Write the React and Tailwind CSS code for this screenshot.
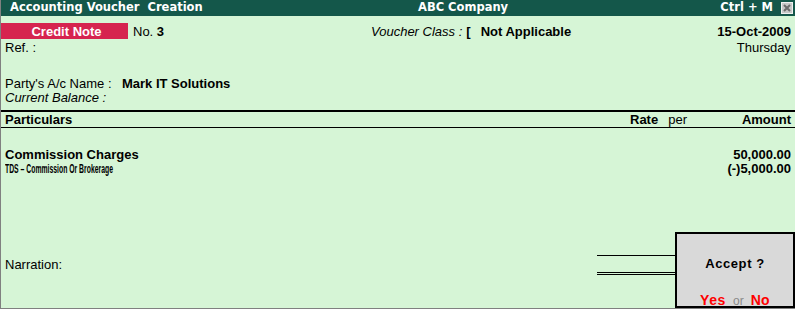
import React from 'react';

function CloseBox() {
    return (
        <span className="ml-[8px] flex h-[12px] w-[12px] items-center justify-center border border-[#f0f0f0] bg-[#c8c8c8]">
            <svg width="8" height="8" viewBox="0 0 8 8">
                <path d="M1 1 L7 7 M7 1 L1 7" stroke="#6b6b6b" strokeWidth="2" />
            </svg>
        </span>
    );
}

export default function App() {
    const base = { fontFamily: '"Liberation Sans", Arial, sans-serif' };
    const title = { fontFamily: '"DejaVu Sans", Verdana, sans-serif' };

    return (
        <div className="h-[315px] w-[801px] bg-white" style={base}>
            <div className="relative flex h-[309px] w-[795px] flex-col border-b border-l border-[#808080] bg-[#d6f5d6] text-[13px] leading-none text-black">
                {/* Title bar */}
                <div
                    className="flex h-[16px] items-center bg-[#14574a] text-[11.5px] font-bold text-white"
                    style={title}
                >
                    <span className="w-[417px] pl-[9px]">Accounting Voucher&nbsp; Creation</span>
                    <span className="flex-1">ABC Company</span>
                    <span>Ctrl + M</span>
                    <CloseBox />
                    <span className="w-[2px]" />
                </div>

                {/* Voucher type row */}
                <div className="mt-[7px] flex h-[16px] items-center">
                    <div className="flex h-[16px] w-[127px] items-center justify-center bg-[#d6244f] pl-[4px] font-bold text-white">
                        Credit Note
                    </div>
                    <div className="w-[243px] pl-[5px]">
                        No. <span className="font-bold">3</span>
                    </div>
                    <span className="italic">Voucher Class :</span>
                    <span className="ml-[4px] font-bold">[</span>
                    <span className="ml-[10px] font-bold">Not Applicable</span>
                    <span className="flex-1 pr-[4px] text-right font-bold">15-Oct-2009</span>
                </div>

                <div className="flex h-[16px] items-center px-[4px]">
                    <span className="flex-1">Ref. :</span>
                    <span>Thursday</span>
                </div>

                {/* Party */}
                <div className="mt-[21px] flex h-[14px] items-center pl-[4px]">
                    <span className="w-[117px]">Party's A/c Name :</span>
                    <span className="font-bold">Mark IT Solutions</span>
                </div>
                <div className="flex h-[14px] items-center pl-[4px] italic">Current Balance :</div>

                {/* Table header */}
                <div className="mt-[6px] h-[2px] bg-black" />
                <div className="flex h-[16px] items-center border-b border-black">
                    <span className="w-[629px] pl-[4px] font-bold">Particulars</span>
                    <span className="font-bold">Rate</span>
                    <span className="ml-[10px]">per</span>
                    <span className="flex-1 pr-[4px] text-right font-bold">Amount</span>
                </div>

                {/* Entries */}
                <div className="mt-[19px] flex h-[14px] items-center px-[4px]">
                    <span className="flex-1 font-bold">Commission Charges</span>
                    <span className="font-bold">50,000.00</span>
                </div>
                <div className="flex h-[14px] items-center px-[4px]">
                    <span className="flex-1">
                        <span className="inline-block origin-left scale-x-[0.57] text-[12px] font-bold whitespace-nowrap">
                            TDS – Commission Or Brokerage
                        </span>
                    </span>
                    <span className="font-bold">(-)5,000.00</span>
                </div>

                {/* Narration */}
                <div className="mt-[80px] flex h-[20px]">
                    <div className="w-[596px] pl-[4px] pt-[3px]">
                        <span className="flex h-[13px] items-center">Narration:</span>
                    </div>
                    <div className="w-[78px]">
                        <div className="h-[1px] bg-black" />
                        <div className="mt-[16px] h-[3px] border-y border-black" />
                    </div>
                </div>

                {/* Accept dialog */}
                <div className="absolute left-[674px] top-[232px] flex h-[76px] w-[120px] flex-col items-center border-2 border-black bg-[#d9d9d9]">
                    <div className="mt-[23px] font-bold tracking-[0.6px]">Accept ?</div>
                    <div className="mt-[23px] flex items-baseline">
                        <span className="text-[14px] font-bold tracking-[0.6px] text-[#ff0000]">Yes</span>
                        <span className="mx-[7px] text-[12px] text-[#8a8a8a]">or</span>
                        <span className="text-[14px] font-bold tracking-[0.3px] text-[#ff0000]">No</span>
                    </div>
                </div>
            </div>
        </div>
    );
}
